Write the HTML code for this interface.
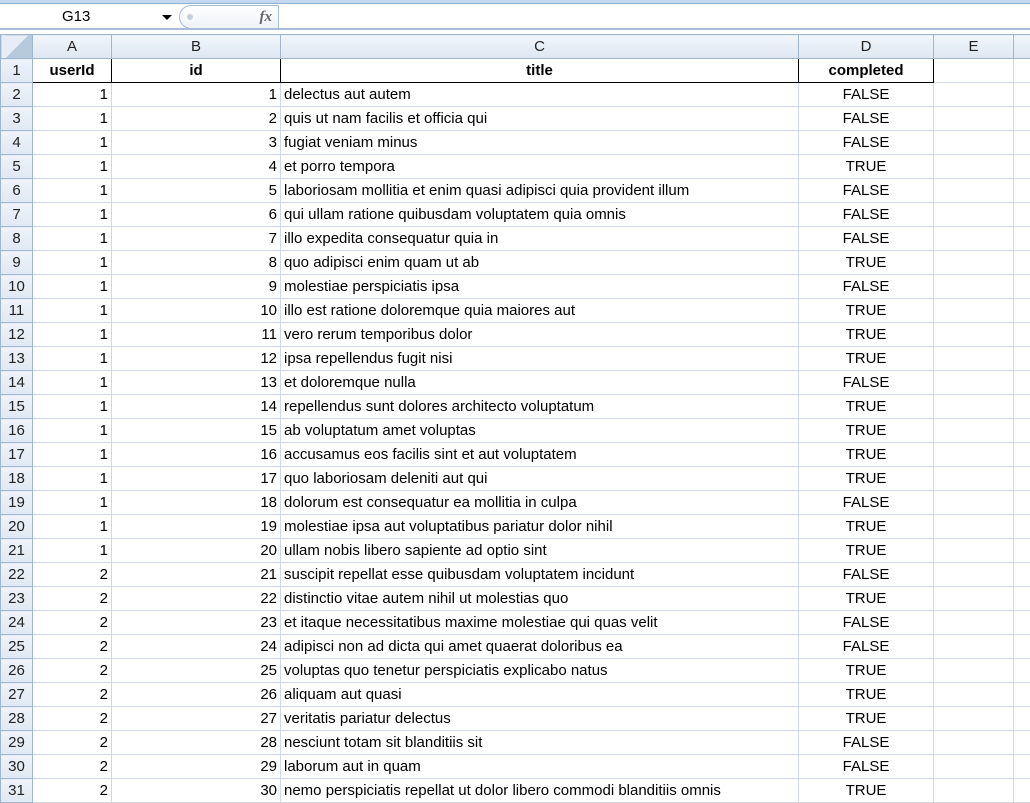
<!DOCTYPE html>
<html><head><meta charset="utf-8"><style>
*{margin:0;padding:0;box-sizing:border-box}
body{width:1030px;height:803px;overflow:hidden;background:#fff;font-family:"Liberation Sans",sans-serif;position:relative}
.top{position:absolute;left:0;top:0;width:1030px;height:4px;background:#c5d9ee;border-bottom:1px solid #8eb0d3}
.fbar{position:absolute;left:0;top:4px;width:1030px;height:26px;background:#fff;border-bottom:2px solid #a7bdd5}
.name{position:absolute;left:0;top:0;width:176px;height:26px;font-size:15px;line-height:26px;padding-left:62px;color:#000}
.arr{position:absolute;left:162px;top:11px;width:0;height:0;border-left:5px solid transparent;border-right:5px solid transparent;border-top:5px solid #000}
.fx{position:absolute;left:179px;top:1px;width:100px;height:24px;border:1px solid #a7bdd5;border-radius:12px 0 0 12px;background:linear-gradient(#fff,#eef3f9);font-family:"Liberation Serif",serif;font-style:italic;font-weight:bold;font-size:15px;color:#666;text-align:right;padding-right:6px;line-height:22px}
.fx:before{content:"";position:absolute;left:7px;top:8px;width:6px;height:6px;border-radius:3px;background:#c8d0da}
.grid{position:absolute;left:0;top:34px;width:1030px;border-collapse:collapse;table-layout:fixed;font-size:15px}
.grid td{height:24px;border:1px solid #d0d7e5;padding:0 3px;white-space:nowrap;overflow:hidden}
.grid tr.h td{background:linear-gradient(#f2f6fb,#dde6f1);border-color:#9eb6ce;text-align:center;color:#222;height:24px}
.grid td.r{background:linear-gradient(#eef3fa,#e0e8f3);border-color:#9eb6ce;text-align:center;color:#222}
.n{text-align:right}.c{text-align:center}
tr.b td.x{font-weight:bold;text-align:center;border:1px solid #000}
</style></head><body>
<div class="top"></div>
<div class="fbar"><div class="name">G13</div><div class="arr"></div><div class="fx">fx</div></div>
<table class="grid">
<colgroup><col style="width:32px"><col style="width:79px"><col style="width:169px"><col style="width:518px"><col style="width:135px"><col style="width:80px"><col style="width:17px"></colgroup>
<tr class="h"><td style="background:linear-gradient(135deg,#e6edf6 50%,#b7c9dd 50%)"></td><td>A</td><td>B</td><td>C</td><td>D</td><td>E</td><td></td></tr>
<tr class="b"><td class="r">1</td><td class="x">userId</td><td class="x">id</td><td class="x">title</td><td class="x">completed</td><td></td><td></td></tr>
<tr><td class="r">2</td><td class="n">1</td><td class="n">1</td><td>delectus aut autem</td><td class="c">FALSE</td><td></td><td></td></tr>
<tr><td class="r">3</td><td class="n">1</td><td class="n">2</td><td>quis ut nam facilis et officia qui</td><td class="c">FALSE</td><td></td><td></td></tr>
<tr><td class="r">4</td><td class="n">1</td><td class="n">3</td><td>fugiat veniam minus</td><td class="c">FALSE</td><td></td><td></td></tr>
<tr><td class="r">5</td><td class="n">1</td><td class="n">4</td><td>et porro tempora</td><td class="c">TRUE</td><td></td><td></td></tr>
<tr><td class="r">6</td><td class="n">1</td><td class="n">5</td><td>laboriosam mollitia et enim quasi adipisci quia provident illum</td><td class="c">FALSE</td><td></td><td></td></tr>
<tr><td class="r">7</td><td class="n">1</td><td class="n">6</td><td>qui ullam ratione quibusdam voluptatem quia omnis</td><td class="c">FALSE</td><td></td><td></td></tr>
<tr><td class="r">8</td><td class="n">1</td><td class="n">7</td><td>illo expedita consequatur quia in</td><td class="c">FALSE</td><td></td><td></td></tr>
<tr><td class="r">9</td><td class="n">1</td><td class="n">8</td><td>quo adipisci enim quam ut ab</td><td class="c">TRUE</td><td></td><td></td></tr>
<tr><td class="r">10</td><td class="n">1</td><td class="n">9</td><td>molestiae perspiciatis ipsa</td><td class="c">FALSE</td><td></td><td></td></tr>
<tr><td class="r">11</td><td class="n">1</td><td class="n">10</td><td>illo est ratione doloremque quia maiores aut</td><td class="c">TRUE</td><td></td><td></td></tr>
<tr><td class="r">12</td><td class="n">1</td><td class="n">11</td><td>vero rerum temporibus dolor</td><td class="c">TRUE</td><td></td><td></td></tr>
<tr><td class="r">13</td><td class="n">1</td><td class="n">12</td><td>ipsa repellendus fugit nisi</td><td class="c">TRUE</td><td></td><td></td></tr>
<tr><td class="r">14</td><td class="n">1</td><td class="n">13</td><td>et doloremque nulla</td><td class="c">FALSE</td><td></td><td></td></tr>
<tr><td class="r">15</td><td class="n">1</td><td class="n">14</td><td>repellendus sunt dolores architecto voluptatum</td><td class="c">TRUE</td><td></td><td></td></tr>
<tr><td class="r">16</td><td class="n">1</td><td class="n">15</td><td>ab voluptatum amet voluptas</td><td class="c">TRUE</td><td></td><td></td></tr>
<tr><td class="r">17</td><td class="n">1</td><td class="n">16</td><td>accusamus eos facilis sint et aut voluptatem</td><td class="c">TRUE</td><td></td><td></td></tr>
<tr><td class="r">18</td><td class="n">1</td><td class="n">17</td><td>quo laboriosam deleniti aut qui</td><td class="c">TRUE</td><td></td><td></td></tr>
<tr><td class="r">19</td><td class="n">1</td><td class="n">18</td><td>dolorum est consequatur ea mollitia in culpa</td><td class="c">FALSE</td><td></td><td></td></tr>
<tr><td class="r">20</td><td class="n">1</td><td class="n">19</td><td>molestiae ipsa aut voluptatibus pariatur dolor nihil</td><td class="c">TRUE</td><td></td><td></td></tr>
<tr><td class="r">21</td><td class="n">1</td><td class="n">20</td><td>ullam nobis libero sapiente ad optio sint</td><td class="c">TRUE</td><td></td><td></td></tr>
<tr><td class="r">22</td><td class="n">2</td><td class="n">21</td><td>suscipit repellat esse quibusdam voluptatem incidunt</td><td class="c">FALSE</td><td></td><td></td></tr>
<tr><td class="r">23</td><td class="n">2</td><td class="n">22</td><td>distinctio vitae autem nihil ut molestias quo</td><td class="c">TRUE</td><td></td><td></td></tr>
<tr><td class="r">24</td><td class="n">2</td><td class="n">23</td><td>et itaque necessitatibus maxime molestiae qui quas velit</td><td class="c">FALSE</td><td></td><td></td></tr>
<tr><td class="r">25</td><td class="n">2</td><td class="n">24</td><td>adipisci non ad dicta qui amet quaerat doloribus ea</td><td class="c">FALSE</td><td></td><td></td></tr>
<tr><td class="r">26</td><td class="n">2</td><td class="n">25</td><td>voluptas quo tenetur perspiciatis explicabo natus</td><td class="c">TRUE</td><td></td><td></td></tr>
<tr><td class="r">27</td><td class="n">2</td><td class="n">26</td><td>aliquam aut quasi</td><td class="c">TRUE</td><td></td><td></td></tr>
<tr><td class="r">28</td><td class="n">2</td><td class="n">27</td><td>veritatis pariatur delectus</td><td class="c">TRUE</td><td></td><td></td></tr>
<tr><td class="r">29</td><td class="n">2</td><td class="n">28</td><td>nesciunt totam sit blanditiis sit</td><td class="c">FALSE</td><td></td><td></td></tr>
<tr><td class="r">30</td><td class="n">2</td><td class="n">29</td><td>laborum aut in quam</td><td class="c">FALSE</td><td></td><td></td></tr>
<tr><td class="r">31</td><td class="n">2</td><td class="n">30</td><td>nemo perspiciatis repellat ut dolor libero commodi blanditiis omnis</td><td class="c">TRUE</td><td></td><td></td></tr>
</table>
</body></html>
